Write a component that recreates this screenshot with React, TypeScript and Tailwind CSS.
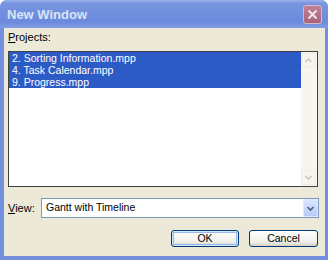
import React from "react";

const ui = { fontFamily: '"Liberation Sans", Arial, sans-serif' };

function ChevronDown({ color, size = 9 }: { color: string; size?: number }) {
  return (
    <svg width={size} height={size} viewBox="0 0 9 9">
      <path d="M1.5 3 L4.5 6 L7.5 3" fill="none" stroke={color} strokeWidth="1.6" />
    </svg>
  );
}
function ChevronUp({ color, size = 9 }: { color: string; size?: number }) {
  return (
    <svg width={size} height={size} viewBox="0 0 9 9">
      <path d="M1.5 6 L4.5 3 L7.5 6" fill="none" stroke={color} strokeWidth="1.4" />
    </svg>
  );
}

export default function App() {
  const items = ["2. Sorting Information.mpp", "4. Task Calendar.mpp", "9. Progress.mpp"];
  return (
    <div
      className="w-[328px] h-[260px] flex flex-col bg-[#7390df] rounded-t-[7px] overflow-hidden"
      style={ui}
    >
      {/* Title bar */}
      <div className="h-[28px] shrink-0 flex items-center pl-[7px] pr-[6px] bg-[linear-gradient(to_bottom,#9cb2ec_0%,#7894e0_12%,#6c8ade_80%,#849ee4_100%)]">
        <div className="flex-1 text-[13px] font-bold text-[#d8e4f8] leading-none pt-[1px]">
          New Window
        </div>
        <div className="w-[19px] h-[19px] rounded-[3px] border border-[#d8b8c4] bg-[linear-gradient(to_bottom,#bf8096,#a9647b)] flex items-center justify-center">
          <svg width="11" height="11" viewBox="0 0 11 11">
            <path d="M1.5 1.5 L9.5 9.5 M9.5 1.5 L1.5 9.5" stroke="#f4e8ec" strokeWidth="2" />
          </svg>
        </div>
      </div>

      {/* Body */}
      <div className="flex-1 ml-[4px] mr-[3px] mb-[4px] bg-[#ece9d8] flex flex-col pl-[4px] pr-[7px] pt-[3px] text-[11px] text-black">
        <div className="h-[13px] leading-[13px] text-[11px]">
          <span className="underline">P</span>rojects:
        </div>
        {/* Listbox */}
        <div className="mt-[7px] h-[136px] border border-[#404040] bg-white flex">
          <div className="flex-1 flex flex-col">
            {items.map((t) => (
              <div
                key={t}
                className="h-[12px] leading-[12px] bg-[#2d5bc6] text-white pl-[3px] text-[10.5px]"
              >
                {t}
              </div>
            ))}
          </div>
          <div className="w-[16px] bg-[#f6f5f0] flex flex-col justify-between py-[1px] pr-[1px]">
            <div className="h-[15px] w-[15px] border border-[#eeede5] bg-[#f5f4ef] flex items-center justify-center">
              <ChevronUp color="#c9c7bd" />
            </div>
            <div className="h-[15px] w-[15px] border border-[#eeede5] bg-[#f5f4ef] flex items-center justify-center">
              <ChevronDown color="#c9c7bd" />
            </div>
          </div>
        </div>

        {/* View row */}
        <div className="mt-[11px] h-[20px] flex items-center mr-[-1px]">
          <div className="w-[33px] text-[11px]">
            <span className="underline">V</span>iew:
          </div>
          <div className="flex-1 h-[20px] border border-[#7f9db9] bg-white flex items-center">
            <div className="flex-1 pl-[4px] text-[10.5px]">Gantt with Timeline</div>
            <div className="w-[15px] h-[18px] rounded-[2px] border border-[#e0e8fe] bg-[linear-gradient(to_bottom,#dbe6fe,#b7cbf7)] flex items-center justify-center">
              <ChevronDown color="#4d6185" size={9} />
            </div>
          </div>
        </div>

        {/* Buttons */}
        <div className="mt-[12px] flex justify-end gap-[10px]">
          <button className="w-[68px] h-[17px] rounded-[3px] border border-[#003c74] bg-[linear-gradient(to_bottom,#ffffff,#f0f0ea_70%,#d6d0c5)] text-[10.5px] leading-none shadow-[inset_0_0_0_1px_#cee7ff,inset_0_0_0_2px_#98b8ea]">
            OK
          </button>
          <button className="w-[69px] h-[17px] rounded-[3px] border border-[#003c74] bg-[linear-gradient(to_bottom,#ffffff,#f0f0ea_70%,#d6d0c5)] text-[10.5px] leading-none">
            Cancel
          </button>
        </div>
      </div>
    </div>
  );
}
